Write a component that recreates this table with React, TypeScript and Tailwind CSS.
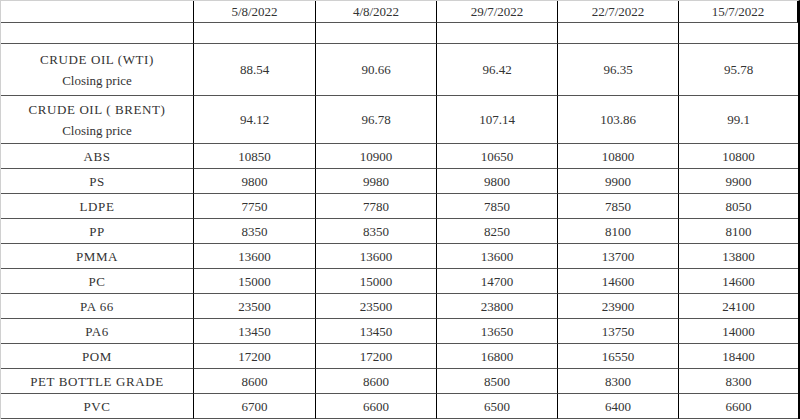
import React from "react";

const dates = ["5/8/2022", "4/8/2022", "29/7/2022", "22/7/2022", "15/7/2022"];

type Row = { label: React.ReactNode; values: string[]; h: string };

const rows: Row[] = [
  { label: "", values: ["", "", "", "", ""], h: "h-[21px]" },
  {
    label: (
      <>
        <div>CRUDE OIL (WTI)</div>
        <div className="tracking-normal">Closing price</div>
      </>
    ),
    values: ["88.54", "90.66", "96.42", "96.35", "95.78"],
    h: "h-[52px]",
  },
  {
    label: (
      <>
        <div>CRUDE OIL ( BRENT)</div>
        <div className="tracking-normal">Closing price</div>
      </>
    ),
    values: ["94.12", "96.78", "107.14", "103.86", "99.1"],
    h: "h-[48px]",
  },
  { label: "ABS", values: ["10850", "10900", "10650", "10800", "10800"], h: "h-[25px]" },
  { label: "PS", values: ["9800", "9980", "9800", "9900", "9900"], h: "h-[25px]" },
  { label: "LDPE", values: ["7750", "7780", "7850", "7850", "8050"], h: "h-[25px]" },
  { label: "PP", values: ["8350", "8350", "8250", "8100", "8100"], h: "h-[25px]" },
  { label: "PMMA", values: ["13600", "13600", "13600", "13700", "13800"], h: "h-[25px]" },
  { label: "PC", values: ["15000", "15000", "14700", "14600", "14600"], h: "h-[25px]" },
  { label: "PA 66", values: ["23500", "23500", "23800", "23900", "24100"], h: "h-[25px]" },
  { label: "PA6", values: ["13450", "13450", "13650", "13750", "14000"], h: "h-[25px]" },
  { label: "POM", values: ["17200", "17200", "16800", "16550", "18400"], h: "h-[25px]" },
  { label: "PET BOTTLE GRADE", values: ["8600", "8600", "8500", "8300", "8300"], h: "h-[25px]" },
  { label: "PVC", values: ["6700", "6600", "6500", "6400", "6600"], h: "h-[25px]" },
];

const cell =
  "flex flex-col items-center justify-center text-center border-r border-r-black border-b border-b-[#555]";

export default function App() {
  return (
    <div
      className="w-[800px] h-[420px] bg-white text-[#333] text-[13px] leading-[21px] overflow-hidden"
      style={{ fontFamily: '"Liberation Serif", "Times New Roman", serif' }}
    >
      <div className="grid grid-cols-[193px_122px_121px_121px_121px_119px] border-t border-t-[#d0d0d0] border-l border-l-[#d0d0d0] border-r-[2px] border-r-black w-[800px]">
        <div className={`${cell} h-[22px]`} />
        {dates.map((d) => (
          <div key={d} className={`${cell} h-[22px]`}>
            {d}
          </div>
        ))}
        {rows.map((r, i) => (
          <React.Fragment key={i}>
            <div className={`${cell} ${r.h} tracking-[0.6px]`}>{r.label}</div>
            {r.values.map((v, j) => (
              <div key={j} className={`${cell} ${r.h} ${j === 4 ? "border-r-0" : ""}`}>
                {v}
              </div>
            ))}
          </React.Fragment>
        ))}
      </div>
    </div>
  );
}
